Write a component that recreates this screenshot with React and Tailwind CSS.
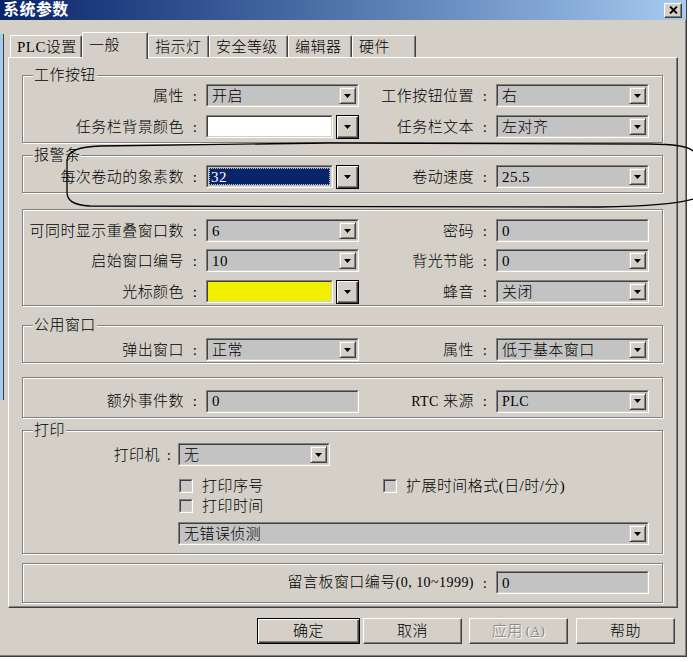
import React from "react";

// 经典 Win2000 风格的“系统参数”对话框
const FONT = "font-['Liberation_Serif','Noto_Sans_CJK_SC',serif]";

function Arrow() {
  return (
    <svg width="7" height="4" viewBox="0 0 7 4">
      <path d="M0 0h7L3.5 4z" fill="#000" />
    </svg>
  );
}

function DropButton({ framed = false }) {
  if (framed) {
    return (
      <div className="ml-[3px] flex h-[24px] w-[23px] shrink-0 items-center justify-center border border-black bg-[#d4d0c8] shadow-[inset_1px_1px_0_#fff,inset_-1px_-1px_0_#404040,inset_-2px_-2px_0_#808080]">
        <Arrow />
      </div>
    );
  }
  return (
    <div className="mr-px flex h-[17px] w-[17px] shrink-0 items-center justify-center border border-t-[#d4d0c8] border-l-[#d4d0c8] border-r-[#404040] border-b-[#404040] bg-[#d4d0c8] shadow-[inset_1px_1px_0_#fff,inset_-1px_-1px_0_#808080]">
      <Arrow />
    </div>
  );
}

function Sunken({ className = "", inner = "", children }) {
  return (
    <div className={`shrink-0 border border-t-[#808080] border-l-[#808080] border-r-white border-b-white ${className}`}>
      <div className={`flex h-full items-center border border-t-[#404040] border-l-[#404040] border-r-[#d4d0c8] border-b-[#d4d0c8] ${inner}`}>
        {children}
      </div>
    </div>
  );
}

function Combo({ value, w = "w-[153px]", button = true }) {
  return (
    <Sunken className={`h-[23px] ${w}`} inner="bg-[#c3c3c3]">
      <span className="flex-1 truncate pl-[4px]">{value}</span>
      {button && <DropButton />}
    </Sunken>
  );
}

function ColorCombo({ color }) {
  return (
    <div className="flex w-[153px] shrink-0 items-center">
      <Sunken className="h-[23px] w-[127px]" inner={color} />
      <DropButton framed />
    </div>
  );
}

function SelectedCombo({ value }) {
  return (
    <div className="flex w-[153px] shrink-0 items-center">
      <Sunken className="h-[23px] w-[127px]" inner="bg-[#c3c3c3] p-px">
        <div className="flex h-full flex-1 items-center border border-dotted border-[#c3c3c3] bg-[#0a246a] pl-px text-white">
          {value}
        </div>
      </Sunken>
      <DropButton framed />
    </div>
  );
}

function Lbl({ w, colon = "w-[22px]", children }) {
  return (
    <>
      <div className={`${w} shrink-0 whitespace-nowrap text-right`}>{children}</div>
      <div className={`${colon} shrink-0 text-center`}>:</div>
    </>
  );
}

function Group({ title, className = "", children }) {
  return (
    <div className={`w-[641px] shrink-0 border border-[#808080] shadow-[inset_1px_1px_0_#fff,1px_1px_0_#fff] ${className}`}>
      {title && (
        <div className="-mt-[9px] ml-[10px] h-[16px] w-fit bg-[#d4d0c8] px-px leading-[16px]">{title}</div>
      )}
      {children}
    </div>
  );
}

function Check({ label, className = "" }) {
  return (
    <div className={`flex items-center ${className}`}>
      <div className="h-[14px] w-[14px] border border-t-[#808080] border-l-[#808080] border-r-white border-b-white">
        <div className="h-full w-full border border-t-[#404040] border-l-[#404040] border-r-[#d4d0c8] border-b-[#d4d0c8] bg-[#c8c8c8]" />
      </div>
      <span className="ml-[9px]">{label}</span>
    </div>
  );
}

function Tab({ label, w, active = false }) {
  if (active) {
    return (
      <div className={`relative z-10 -mb-[2px] h-[27px] ${w} shrink-0 rounded-t-[2px] border-l border-t border-white border-r border-r-[#404040] bg-[#d4d0c8] pl-[6px] pt-[4px] shadow-[inset_-1px_0_0_#808080]`}>
        {label}
      </div>
    );
  }
  return (
    <div className={`h-[22px] ${w} shrink-0 rounded-t-[2px] border-l border-t border-white border-r border-r-[#404040] pl-[6px] pt-[3px] shadow-[inset_-1px_0_0_#808080]`}>
      {label}
    </div>
  );
}

function Button({ children, w = "w-[99px]", isDefault = false, disabled = false, className = "" }) {
  const frame = isDefault
    ? "border border-black shadow-[inset_1px_1px_0_#fff,inset_-1px_-1px_0_#404040,inset_-2px_-2px_0_#808080]"
    : "border border-t-white border-l-white border-r-[#404040] border-b-[#404040] shadow-[inset_-1px_-1px_0_#808080]";
  return (
    <div className={`flex h-[26px] ${w} shrink-0 items-center justify-center ${frame} ${disabled ? "text-[#808080] [text-shadow:1px_1px_0_#fff]" : ""} ${className}`}>
      {children}
    </div>
  );
}

export default function App() {
  return (
    <div className={`relative h-[662px] w-[693px] overflow-hidden bg-white text-[15px] font-light leading-[16px] tracking-[0.45px] text-black ${FONT}`}>
      <div className="flex h-[657px] w-[687px] flex-col border-b border-r border-[#404040] bg-[#d4d0c8] shadow-[inset_-1px_-1px_0_#808080]">
        {/* 标题栏 */}
        <div className="flex h-[20px] shrink-0 items-center bg-linear-to-r from-[#0a246a] to-[#a6caf0] pl-[3px] pr-[4px]">
          <span className="text-[16px] font-bold text-white">系统参数</span>
          <div className="ml-auto flex h-[15px] w-[18px] items-center justify-center border border-t-white border-l-white border-r-[#404040] border-b-[#404040] bg-[#d4d0c8] shadow-[inset_-1px_-1px_0_#808080]">
            <svg width="9" height="8" viewBox="0 0 9 8">
              <path d="M1 0.5l7 7M8 0.5l-7 7" stroke="#000" strokeWidth="1.8" />
            </svg>
          </div>
        </div>

        <div className="flex flex-1">
          {/* 左侧蓝色边条 */}
          <div className="w-[4px] shrink-0 pt-[14px]">
            <div className="h-[366px] border-r border-[#404040] bg-[#a6caf0]" />
          </div>

          <div className="ml-[4px] flex flex-col">
            {/* 选项卡 */}
            <div className="mt-[12px] flex h-[25px] items-end pl-[2px]">
              <Tab label="PLC设置" w="w-[72px]" />
              <Tab label="一般" w="w-[66px]" active />
              <Tab label="指示灯" w="w-[61px]" />
              <Tab label="安全等级" w="w-[79px]" />
              <Tab label="编辑器" w="w-[64px]" />
              <Tab label="硬件" w="w-[64px]" />
            </div>

            {/* 面板 */}
            <div className="flex h-[551px] w-[670px] flex-col border border-t-white border-l-white border-r-[#404040] border-b-[#404040] pl-[13px] shadow-[inset_-1px_-1px_0_#808080]">
              {/* 工作按钮 */}
              <Group title="工作按钮" className="mt-[17px] h-[68px]">
                <div className="mt-px flex h-[23px] items-center">
                  <Lbl w="w-[161px]">属性</Lbl>
                  <Combo value="开启" />
                  <Lbl w="w-[115px]">工作按钮位置</Lbl>
                  <Combo value="右" />
                </div>
                <div className="mt-[8px] flex h-[23px] items-center">
                  <Lbl w="w-[161px]">任务栏背景颜色</Lbl>
                  <ColorCombo color="bg-white" />
                  <Lbl w="w-[115px]">任务栏文本</Lbl>
                  <Combo value="左对齐" />
                </div>
              </Group>

              {/* 报警条 */}
              <Group title="报警条" className="mt-[12px] h-[38px]">
                <div className="mt-[2px] flex h-[23px] items-center">
                  <Lbl w="w-[161px]">每次卷动的象素数</Lbl>
                  <SelectedCombo value="32" />
                  <Lbl w="w-[115px]">卷动速度</Lbl>
                  <Combo value="25.5" />
                </div>
              </Group>

              <Group className="mt-[16px] h-[97px] pt-[9px]">
                <div className="flex h-[23px] items-center">
                  <Lbl w="w-[161px]">可同时显示重叠窗口数</Lbl>
                  <Combo value="6" />
                  <Lbl w="w-[115px]">密码</Lbl>
                  <Combo value="0" button={false} />
                </div>
                <div className="mt-[7px] flex h-[23px] items-center">
                  <Lbl w="w-[161px]">启始窗口编号</Lbl>
                  <Combo value="10" />
                  <Lbl w="w-[115px]">背光节能</Lbl>
                  <Combo value="0" />
                </div>
                <div className="mt-[8px] flex h-[23px] items-center">
                  <Lbl w="w-[161px]">光标颜色</Lbl>
                  <ColorCombo color="bg-[#f0f000]" />
                  <Lbl w="w-[115px]">蜂音</Lbl>
                  <Combo value="关闭" />
                </div>
              </Group>

              {/* 公用窗口 */}
              <Group title="公用窗口" className="mt-[19px] h-[38px]">
                <div className="mt-[5px] flex h-[23px] items-center">
                  <Lbl w="w-[161px]">弹出窗口</Lbl>
                  <Combo value="正常" />
                  <Lbl w="w-[115px]">属性</Lbl>
                  <Combo value="低于基本窗口" />
                </div>
              </Group>

              <Group className="mt-[14px] h-[41px] pt-[12px]">
                <div className="flex h-[22px] items-center">
                  <Lbl w="w-[161px]">额外事件数</Lbl>
                  <Combo value="0" button={false} />
                  <Lbl w="w-[115px]">
                    <span className="text-[14px]">RTC</span> 来源
                  </Lbl>
                  <Combo value={<span className="text-[14px]">PLC</span>} />
                </div>
              </Group>

              {/* 打印 */}
              <Group title="打印" className="mt-[12px] h-[124px]">
                <div className="mt-[5px] flex h-[23px] items-center">
                  <Lbl w="w-[137px]" colon="w-[18px]">打印机</Lbl>
                  <Combo value="无" w="w-[152px]" />
                </div>
                <div className="ml-[156px] mt-[12px] flex h-[15px] items-center">
                  <Check label="打印序号" className="w-[204px]" />
                  <Check label="扩展时间格式(日/时/分)" />
                </div>
                <div className="ml-[156px] mt-[5px] flex h-[15px] items-center">
                  <Check label="打印时间" />
                </div>
                <div className="ml-[155px] mt-[9px] flex">
                  <Combo value="无错误侦测" w="w-[471px]" />
                </div>
              </Group>

              <Group className="mt-[9px] h-[40px] pt-[7px]">
                <div className="flex h-[23px] items-center">
                  <Lbl w="w-[451px]">
                    留言板窗口编号<span className="text-[14px]">(0, 10~1999)</span>
                  </Lbl>
                  <Combo value="0" button={false} />
                </div>
              </Group>
            </div>

            {/* 按钮 */}
            <div className="mt-[10px] flex pl-[249px]">
              <Button w="w-[103px]" isDefault>确定</Button>
              <Button className="ml-[3px]">取消</Button>
              <Button className="ml-[7px]" disabled>
                应用<span className="ml-[3px] text-[13px]">(<span className="underline">A</span>)</span>
              </Button>
              <Button className="ml-[8px]">帮助</Button>
            </div>
          </div>
        </div>
      </div>

      {/* 手绘标注圈 */}
      <svg className="pointer-events-none absolute left-0 top-0" width="693" height="662" viewBox="0 0 693 662">
        <path
          d="M693 151 C688 146 676 144 650 144 L330 143 L100 146 C80 147 68 150 67 160 L67 192 C67 200 72 205 90 206 L600 207 C650 206 680 203 693 199"
          fill="none"
          stroke="#000"
          strokeWidth="1.3"
        />
      </svg>
    </div>
  );
}
